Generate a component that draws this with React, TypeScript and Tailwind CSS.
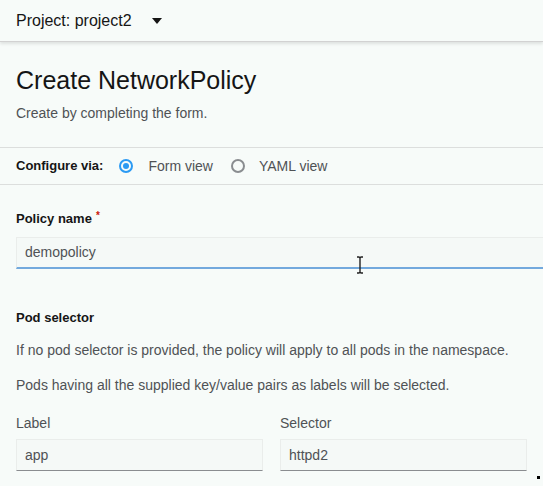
export default function App() {
  return (
    <div className="relative h-[486px] w-[543px] overflow-hidden bg-[#f7fbf9] font-['Liberation_Sans',sans-serif] text-[#151515]">
      <header className="flex h-[42px] items-center border-b border-[#d2d2d2] px-4 shadow-[0_2px_3px_rgba(0,0,0,0.1)]">
        <span className="text-[16px] leading-[20px] text-[#151515]">Project: project2</span>
        <svg className="ml-[20px]" width="10" height="6" viewBox="0 0 10 6">
          <path d="M0 0h10L5 6z" fill="#151515" />
        </svg>
      </header>

      <section className="px-4 pt-[23px] pb-[24px]">
        <h1 className="text-[25px] leading-[30px] text-[#151515]">Create NetworkPolicy</h1>
        <p className="mt-[8px] text-[14px] leading-[20px] text-[#4f5255]">Create by completing the form.</p>
      </section>

      <div className="flex h-[38px] items-center border-y border-[#dcdedd] px-4 text-[14px] leading-[20px]">
        <span className="text-[13px] font-bold text-[#151515]">Configure via:</span>
        <span className="ml-[16px] flex h-[14px] w-[14px] items-center justify-center rounded-full border-2 border-[#2b9af3]">
          <span className="h-[6px] w-[6px] rounded-full bg-[#2b9af3]" />
        </span>
        <span className="ml-[15px] text-[#4f5255]">Form view</span>
        <span className="ml-[18px] h-[14px] w-[14px] rounded-full border-2 border-[#8a8d90]" />
        <span className="ml-[14px] text-[#4f5255]">YAML view</span>
      </div>

      <div className="pl-4 pt-[24px]">
        <div className="flex items-start text-[13px] font-bold leading-[20px]">
          Policy name
          <span className="ml-[4px] text-[10px] leading-[14px] text-[#c9190b]">*</span>
        </div>
        <div className="mt-[8px] flex h-[32px] w-[560px] items-center border border-b-2 border-[#eaedeb] border-b-[#73a9dd] bg-[#f5f9f7] px-2 text-[14px] text-[#4f5255]">
          demopolicy
        </div>
      </div>

      <div className="px-4 pt-[39px]">
        <div className="text-[13px] font-bold leading-[20px]">Pod selector</div>
        <p className="mt-[12px] text-[14px] leading-[20px] text-[#4f5255]">
          If no pod selector is provided, the policy will apply to all pods in the namespace.
        </p>
        <p className="mt-[15px] text-[14px] leading-[20px] text-[#4f5255]">
          Pods having all the supplied key/value pairs as labels will be selected.
        </p>
        <div className="mt-[18px] flex gap-[17px]">
          <div className="w-[247px]">
            <div className="text-[14px] leading-[20px] text-[#4f5255]">Label</div>
            <div className="mt-[6px] flex h-[32px] items-center border border-[#eaedeb] border-b-[#8a8d90] bg-[#f5f9f7] px-2 text-[14px] text-[#4f5255]">
              app
            </div>
          </div>
          <div className="w-[247px]">
            <div className="text-[14px] leading-[20px] text-[#4f5255]">Selector</div>
            <div className="mt-[6px] flex h-[32px] items-center border border-[#eaedeb] border-b-[#8a8d90] bg-[#f5f9f7] px-2 text-[14px] text-[#4f5255]">
              httpd2
            </div>
          </div>
        </div>
      </div>

      <svg className="absolute left-[356px] top-[256px]" width="8" height="18" viewBox="0 0 8 18">
        <path d="M1 1h2l1 1 1-1h2M4 2v14M1 17h2l1-1 1 1h2" stroke="#222" strokeWidth="1.4" fill="none" />
      </svg>
      <div className="absolute left-[537px] top-[476px] h-[3px] w-[3px] bg-black" />
    </div>
  );
}
